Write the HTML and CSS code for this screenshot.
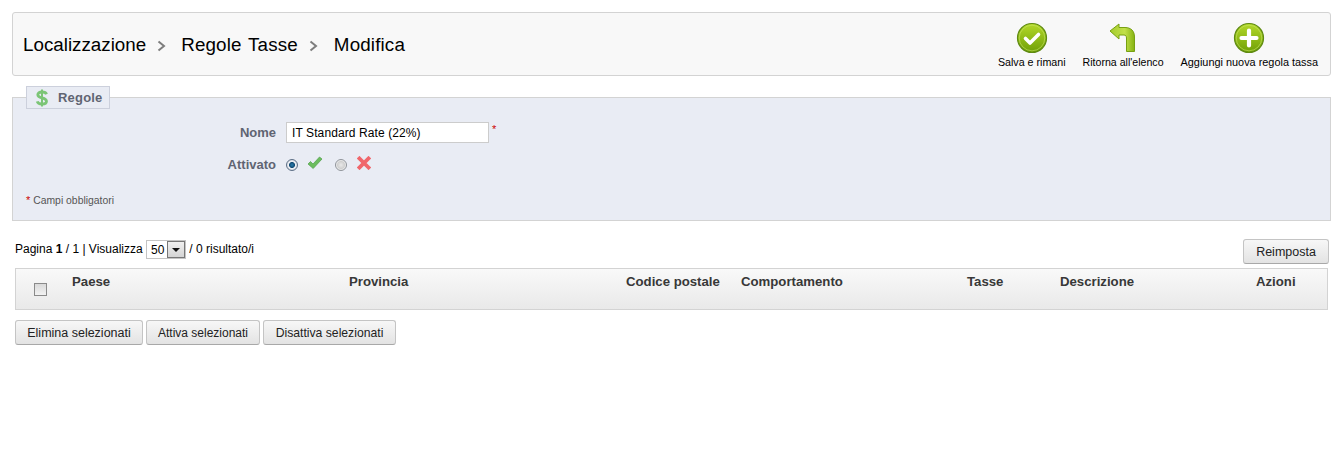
FILE: index.html
```html
<!DOCTYPE html>
<html lang="it">
<head>
<meta charset="utf-8">
<title>Regole Tasse</title>
<link rel="stylesheet" href="styles.css">
</head>
<body>
<svg class="defs" width="0" height="0" aria-hidden="true">
  <defs>
    <linearGradient id="green" x1="0" y1="0" x2="0" y2="1">
      <stop offset="0" stop-color="#b4d92a"/>
      <stop offset="1" stop-color="#6f9f06"/>
    </linearGradient>
    <linearGradient id="green-arrow" x1="0" y1="0" x2="1" y2="0">
      <stop offset="0" stop-color="#a4cc2c"/>
      <stop offset="0.6" stop-color="#c2e04a"/>
      <stop offset="1" stop-color="#86b312"/>
    </linearGradient>
  </defs>
</svg>
<header class="page-head">
  <h1 class="crumbs">
    <span>Localizzazione</span>
    <svg class="sep" width="9" height="12" viewBox="0 0 9 12"><path d="M1.500 1.500 7 6l-5.500 4.500" fill="none" stroke="#7d7d7d" stroke-width="2"/></svg>
    <span class="crumb-wide">Regole Tasse</span>
    <svg class="sep" width="9" height="12" viewBox="0 0 9 12"><path d="M1.500 1.500 7 6l-5.500 4.500" fill="none" stroke="#7d7d7d" stroke-width="2"/></svg>
    <span class="crumb-last">Modifica</span>
  </h1>
  <nav class="toolbar">
    <a class="tool tool-save">
      <svg width="32" height="32" viewBox="0 0 32 32"><circle cx="16" cy="16" r="14.500" fill="url(#green)" stroke="#5f8a12" stroke-width="1.200"/><circle cx="16" cy="16" r="12.800" fill="none" stroke="#c9e66a" stroke-width=".8" opacity=".7"/><path d="M9.500 16.500l4.500 4.500 8.500-8.500" fill="none" stroke="#fff" stroke-width="3.600" stroke-linecap="round" stroke-linejoin="round"/></svg>
      <span>Salva e rimani</span>
    </a>
    <a class="tool tool-back">
      <svg width="32" height="32" viewBox="0 0 32 32"><path d="M3 9 12 2V5.500H18C24 5.500 27.500 9 27.500 15V29.500H19.500V16C19.500 14 18.500 13 17 13H12V17Z" fill="url(#green-arrow)" stroke="#77a012" stroke-width="1"/></svg>
      <span>Ritorna all'elenco</span>
    </a>
    <a class="tool tool-add">
      <svg width="32" height="32" viewBox="0 0 32 32"><circle cx="16" cy="16" r="14.500" fill="url(#green)" stroke="#5f8a12" stroke-width="1.200"/><circle cx="16" cy="16" r="12.800" fill="none" stroke="#c9e66a" stroke-width=".8" opacity=".7"/><path d="M16 8.500v15M8.500 16h15" stroke="#fff" stroke-width="4.200" stroke-linecap="round"/></svg>
      <span>Aggiungi nuova regola tassa</span>
    </a>
  </nav>
</header>

<form class="panel-form">
  <fieldset class="panel">
    <legend class="panel-legend">
      <svg width="16" height="18" viewBox="0 0 16 18"><path d="M12.500 5.200C12 3.700 10.300 3 8 3 5.500 3 3.800 4 3.800 5.800c0 4 8.700 2.300 8.700 6.400C12.500 14 10.700 15 8 15c-2.500 0-4.300-.9-4.800-2.600" fill="none" stroke="#7cc576" stroke-width="2.800"/><path d="M8 .5v17" stroke="#7cc576" stroke-width="2"/></svg>
      <span>Regole</span>
    </legend>
    <div class="row row-name">
      <label class="row-label">Nome</label>
      <input class="text-input" type="text" value="IT Standard Rate (22%)">
      <sup class="req">*</sup>
    </div>
    <div class="row row-active">
      <label class="row-label">Attivato</label>
      <span class="radio radio-on"></span>
      <svg class="mark-yes" width="16" height="14" viewBox="0 0 16 14"><path d="M1 8l2.500-2.500 2.500 2.500 6.500-7 2.500 2-8.800 9.500z" fill="#6cbd5e" stroke="#4f9f49" stroke-width=".7"/></svg>
      <span class="radio radio-off"></span>
      <svg class="mark-no" width="14" height="14" viewBox="0 0 14 14"><path d="M2.500 2.500l9 9M11.500 2.500l-9 9" stroke="#f0666b" stroke-width="3.800" stroke-linecap="square"/></svg>
    </div>
    <p class="note"><span class="req">*</span> Campi obbligatori</p>
  </fieldset>
</form>

<div class="list-top">
  <div class="pager">Pagina <b>1</b> / 1 | Visualizza <span class="select"><span class="select-value">50</span><span class="select-arrow"></span></span> / 0 risultato/i</div>
  <button class="btn btn-reset" type="button">Reimposta</button>
</div>

<table class="grid">
  <colgroup>
    <col class="c-check"><col class="c-country"><col class="c-state"><col class="c-zip"><col class="c-behavior"><col class="c-tax"><col class="c-desc"><col class="c-act">
  </colgroup>
  <thead>
    <tr>
      <th class="check-cell"><span class="checkbox"></span></th>
      <th>Paese</th>
      <th>Provincia</th>
      <th>Codice postale</th>
      <th>Comportamento</th>
      <th>Tasse</th>
      <th>Descrizione</th>
      <th>Azioni</th>
    </tr>
  </thead>
</table>

<div class="bulk">
  <button class="btn btn-delete" type="button">Elimina selezionati</button>
  <button class="btn btn-enable" type="button">Attiva selezionati</button>
  <button class="btn btn-disable" type="button">Disattiva selezionati</button>
</div>
</body>
</html>
```
FILE: styles.css
```css
html, body { margin: 0; padding: 0; background: #fff; }
body {
  font-family: "Liberation Sans", Arial, sans-serif;
  font-size: 12px;
  color: #383838;
  padding: 12px 11px 0 12px;
  height: 448px;
  overflow: hidden;
}
.defs { position: absolute; }

.page-head {
  height: 62px;
  border: 1px solid #d3d3d3;
  border-radius: 3px;
  background: #f8f8f8;
  display: flex;
  justify-content: space-between;
  padding: 0 12px 0 10px;
}
.crumbs {
  margin: 0;
  padding-top: 2px;
  box-sizing: border-box;
  font-size: 18.800px;
  font-weight: 400;
  color: #000;
  display: flex;
  align-items: center;
  height: 62px;
}
.crumb-wide { word-spacing: 1.500px; letter-spacing: .14px; }
.crumb-last { margin-left: 1px; letter-spacing: .15px; }
.sep { margin: 2px 15px 0 11px; }

.toolbar { display: flex; gap: 17px; }
.tool {
  display: flex;
  flex-direction: column;
  align-items: center;
  color: #000;
  padding-top: 9px;
}
.tool-save { font-size: 10.700px; }
.tool-back { font-size: 10.600px; }
.tool-add { font-size: 10.900px; }
.tool svg { display: block; margin-bottom: 2px; }

.panel-form { margin: 0; }
.panel {
  margin: 10px 0 0;
  padding: 0 0 13px;
  border: 1px solid #d3d3d3;
  background: #e9ecf4;
  min-width: 0;
  height: 120px;
  box-sizing: content-box;
}
.panel-legend {
  margin-left: 13px;
  padding: 0 6px 0 7px;
  height: 21px;
  border: 1px solid #ccd0dc;
  background: #e9ecf4;
  display: flex;
  align-items: center;
  gap: 8px;
  font-size: 13px;
  letter-spacing: .2px;
  font-weight: 700;
  color: #5f6472;
}

.row { display: flex; align-items: center; }
.row-label {
  width: 263px;
  text-align: right;
  font-size: 13px;
  font-weight: 700;
  color: #5f6472;
  margin-right: 10px;
}
.row-name { margin-top: 13px; height: 21px; }
.text-input {
  width: 191px;
  height: 17px;
  padding: 1px 5px;
  margin: 0;
  border: 1px solid #ccc;
  background: #fff;
  font: 12px "Liberation Sans", Arial, sans-serif;
  letter-spacing: .1px;
  color: #000;
}
.req { color: #c00; font-size: 11px; margin-left: 3px; align-self: flex-start; line-height: 14px; }
.row-active { margin-top: 11px; height: 20px; }
.radio {
  width: 12px;
  height: 12px;
  border-radius: 50%;
  border: 1px solid #8f9399;
  background: radial-gradient(circle, #e9e9e9 0, #d0d0d0 50%, #f2f2f2 70%);
  box-sizing: border-box;
  margin-top: 2px;
}
.radio-on {
  border-color: #5d6f86;
  background: radial-gradient(circle, #2a7fb0 0, #134a72 38%, #f1f3f8 46%, #d9dde4 70%);
}
.mark-yes { margin: -2px 12px 0 9px; }
.mark-no { margin: -2px 0 0 10px; }

.note {
  margin: 19px 0 0 13px;
  font-size: 10.400px;
  color: #555;
}
.note .req { margin-left: 0; font-size: 11px; }

.list-top {
  display: flex;
  justify-content: space-between;
  margin: 17px 2px 0 3px;
  height: 26px;
}
.pager { color: #000; padding-top: 2px; }
.select {
  display: inline-flex;
  align-items: center;
  justify-content: space-between;
  width: 38px;
  height: 17px;
  box-sizing: content-box;
  border: 1px solid #c4c4c4;
  background: #fff;
  vertical-align: middle;
}
.select-value { padding-left: 4px; }
.select-arrow {
  width: 16px;
  height: 15px;
  border: 1px solid #777;
  background: linear-gradient(#f0f0f0, #d4d4d4);
  position: relative;
  box-sizing: content-box;
}
.select-arrow::after {
  content: "";
  position: absolute;
  left: 4px;
  top: 6px;
  border: 4px solid transparent;
  border-top-color: #111;
  border-bottom-width: 0;
}

.btn {
  height: 25px;
  padding: 0;
  margin: 0;
  border: 1px solid #c4c4c4;
  border-bottom-color: #a8a8a8;
  border-radius: 3px;
  background: linear-gradient(#f7f7f7, #e3e3e3);
  font: 12px "Liberation Sans", Arial, sans-serif;
  color: #222;
  box-sizing: border-box;
}
.btn-reset { width: 86px; font-size: 12.500px; margin-top: 1px; }
.btn-delete { width: 128px; font-size: 12.500px; }
.btn-enable { width: 114px; }
.btn-disable { width: 133px; font-size: 12.200px; }

.grid {
  margin: 4px 2px 0 3px;
  width: 1313px;
  table-layout: fixed;
  border-collapse: separate;
  border-spacing: 0;
  border: 1px solid #d3d3d3;
  background: linear-gradient(#f9f9f9, #e9e9e9);
}
.c-check { width: 50px; }
.c-country { width: 277px; }
.c-state { width: 277px; }
.c-zip { width: 115px; }
.c-behavior { width: 226px; }
.c-tax { width: 93px; }
.c-desc { width: 196px; }
.c-act { width: 77px; }
.grid th {
  height: 40px;
  box-sizing: border-box;
  padding: 5px 6px 0;
  text-align: left;
  vertical-align: top;
  font-size: 13.200px;
  font-weight: 700;
  color: #383838;
}
.grid .check-cell { padding: 14px 0 0 18px; }
.checkbox {
  display: block;
  width: 13px;
  height: 13px;
  box-sizing: border-box;
  border: 1px solid #8a8a8a;
  background: linear-gradient(#d9d9d9, #f2f2f2);
}

.bulk { display: flex; gap: 3px; margin: 10px 0 0 3px; }
```
